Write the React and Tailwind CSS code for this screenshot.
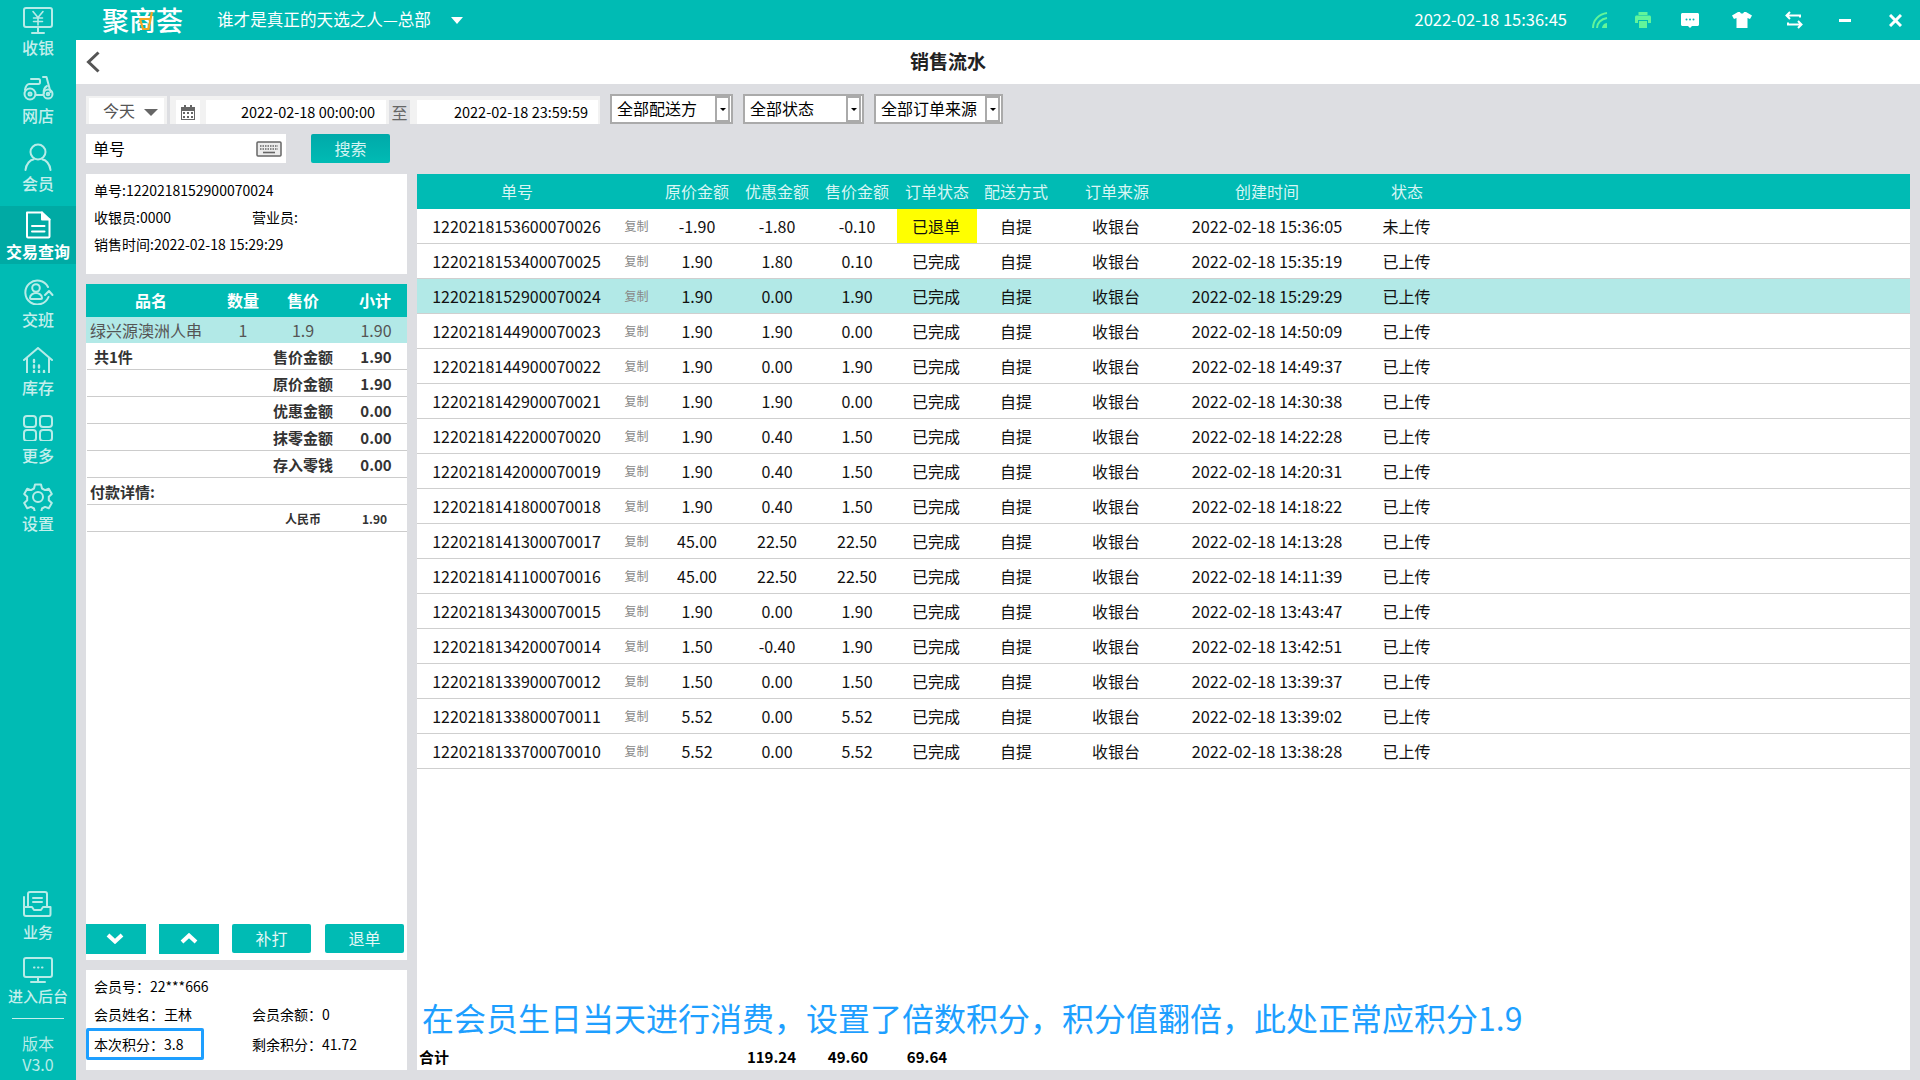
import React from "react";

const font = { fontFamily: '"Noto Sans CJK SC", "Noto Sans", sans-serif' };

const Svg = ({ children, w = 32, h = 28, vb, stroke = "#b7ece8", sw = 2 }) => (
  <svg
    width={w}
    height={h}
    viewBox={vb || `0 0 ${w} ${h}`}
    fill="none"
    stroke={stroke}
    strokeWidth={sw}
    strokeLinecap="round"
    strokeLinejoin="round"
  >
    {children}
  </svg>
);

const icons = {
  cash: (
    <Svg>
      <rect x="2" y="1" width="28" height="19" rx="2" />
      <path d="M11 4.500l5 6 5-6M16 10.500V18M11.500 11h9M11.500 14.500h9" strokeWidth="1.600" />
      <path d="M16 21v4M10 26h12" />
    </Svg>
  ),
  shop: (
    <Svg h={26}>
      <path d="M9 4h7.500c1 0 1.500.7 1.500 1.700v1.600c0 1-.6 1.700-1.600 1.700H7.500" />
      <path d="M21 2h3.500l4 15" />
      <circle cx="8" cy="19" r="5.500" />
      <circle cx="8" cy="19" r="1.500" />
      <circle cx="26" cy="19" r="4.500" />
      <circle cx="26" cy="19" r="1.300" />
      <path d="M13.500 20h7.500M3 15c.5-3 2-6 4.500-6M22 18c-1-3 1-6 3-7" />
    </Svg>
  ),
  member: (
    <Svg h={28}>
      <circle cx="16" cy="9" r="7.500" />
      <path d="M3.500 27c.5-6 5-10.500 8-10.500M28.500 27c-.5-6-5-10.500-8-10.500" />
    </Svg>
  ),
  order: (
    <Svg h={28} stroke="#ffffff">
      <path d="M5 1.500h15l7.500 7v17c0 .6-.4 1-1 1H6c-.6 0-1-.4-1-1z" />
      <path d="M20 1.500v7h7.500" fill="#ffffff" />
      <path d="M10 15h12.500M10 20.500h12.500" />
    </Svg>
  ),
  shift: (
    <Svg h={26}>
      <path d="M26 8A12 12 0 1 0 26.500 18" />
      <circle cx="14" cy="9" r="3.800" />
      <path d="M8 19c0-3 3-5 6-5s6 2 6 5c0 .6-.4 1-1 1H9c-.6 0-1-.4-1-1z" />
      <path d="M23 16l4-4 3.500 4" />
    </Svg>
  ),
  stock: (
    <Svg h={26}>
      <path d="M2 13L16 1l14 12" />
      <path d="M5 11v15M27 11v15" />
      <path d="M12 13v2M12 18.500v2M12 24v1.500M17 18.500v2M17 24v1.500M22 24v1.500" strokeWidth="2.400" />
    </Svg>
  ),
  more: (
    <Svg h={26}>
      <rect x="2" y="1" width="12" height="11" rx="3" />
      <rect x="18" y="1" width="12" height="11" rx="3" />
      <rect x="2" y="15" width="12" height="11" rx="3" />
      <rect x="18" y="15" width="12" height="11" rx="3" />
    </Svg>
  ),
  settings: (
    <Svg h={28}>
      <circle cx="16" cy="14" r="5" />
      <path d="M13 1.500h6l1 4 3 1.600 3.800-1.400 3 5.300-3 2.800v3.400l3 2.800-3 5.300-3.800-1.400-3 1.600-1 4h-6l-1-4-3-1.600-3.800 1.400-3-5.300 3-2.800v-3.400l-3-2.800 3-5.300 3.800 1.400 3-1.600z" />
    </Svg>
  ),
  business: (
    <Svg h={26}>
      <path d="M6 16V3c0-1 .8-2 2-2h15c1 0 2 1 2 2v13" />
      <path d="M2 6v17c0 1 .8 2 2 2h23c1 0 1.500-1 1.500-2v-7H21l-2 3h-7l-2-3H2" />
      <path d="M11 7h9M11 11h9" />
    </Svg>
  ),
  backend: (
    <Svg h={26}>
      <rect x="2" y="1" width="28" height="19" rx="2" />
      <path d="M12 10.500h.5M16 10.500h.5M20 10.500h.5" />
      <path d="M16 20v4M9 25h14" />
    </Svg>
  ),
};

const navTop = [
  { key: "cash", label: "收银" },
  { key: "shop", label: "网店" },
  { key: "member", label: "会员" },
  { key: "order", label: "交易查询", active: true },
  { key: "shift", label: "交班" },
  { key: "stock", label: "库存" },
  { key: "more", label: "更多" },
  { key: "settings", label: "设置" },
];

const orders = [
  ["1220218153600070026", "-1.90", "-1.80", "-0.10", "已退单", "15:36:05", "未上传"],
  ["1220218153400070025", "1.90", "1.80", "0.10", "已完成", "15:35:19", "已上传"],
  ["1220218152900070024", "1.90", "0.00", "1.90", "已完成", "15:29:29", "已上传"],
  ["1220218144900070023", "1.90", "1.90", "0.00", "已完成", "14:50:09", "已上传"],
  ["1220218144900070022", "1.90", "0.00", "1.90", "已完成", "14:49:37", "已上传"],
  ["1220218142900070021", "1.90", "1.90", "0.00", "已完成", "14:30:38", "已上传"],
  ["1220218142200070020", "1.90", "0.40", "1.50", "已完成", "14:22:28", "已上传"],
  ["1220218142000070019", "1.90", "0.40", "1.50", "已完成", "14:20:31", "已上传"],
  ["1220218141800070018", "1.90", "0.40", "1.50", "已完成", "14:18:22", "已上传"],
  ["1220218141300070017", "45.00", "22.50", "22.50", "已完成", "14:13:28", "已上传"],
  ["1220218141100070016", "45.00", "22.50", "22.50", "已完成", "14:11:39", "已上传"],
  ["1220218134300070015", "1.90", "0.00", "1.90", "已完成", "13:43:47", "已上传"],
  ["1220218134200070014", "1.50", "-0.40", "1.90", "已完成", "13:42:51", "已上传"],
  ["1220218133900070012", "1.50", "0.00", "1.50", "已完成", "13:39:37", "已上传"],
  ["1220218133800070011", "5.52", "0.00", "5.52", "已完成", "13:39:02", "已上传"],
  ["1220218133700070010", "5.52", "0.00", "5.52", "已完成", "13:38:28", "已上传"],
];

const summary = [
  ["共1件", "售价金额", "1.90"],
  ["", "原价金额", "1.90"],
  ["", "优惠金额", "0.00"],
  ["", "抹零金额", "0.00"],
  ["", "存入零钱", "0.00"],
];

const rowCols =
  "grid grid-cols-[200px_40px_80px_80px_80px_80px_80px_120px_180px_100px_1fr] items-center text-center";

const NavItem = ({ item }) => (
  <div
    className={`flex h-[58px] mb-[10px] flex-col items-center pt-[5px] ${item.active ? "bg-[#00aaa4]" : ""}`}
  >
    <div className="flex h-[28px] items-start justify-center">{icons[item.key]}</div>
    <div
      className={`mt-[3px] text-[16px] leading-[18px] ${item.active ? "font-bold text-white" : "font-medium text-[#c4efec]"}`}
    >
      {item.label}
    </div>
  </div>
);

const Sidebar = () => (
  <aside className="flex h-full w-[76px] shrink-0 flex-col bg-[#00bbb4] pt-[2px]">
    {navTop.map((item) => (
      <NavItem key={item.key} item={item} />
    ))}
    <div className="mt-auto flex flex-col items-center">
      <div className="flex h-[26px] items-start">{icons.business}</div>
      <div className="mt-[7px] text-[15px] font-medium leading-[16px] text-[#c4efec]">业务</div>
      <div className="mt-[17px] flex h-[26px] items-start">{icons.backend}</div>
      <div className="mt-[5px] text-[15px] font-medium leading-[16px] text-[#c4efec]">进入后台</div>
      <div className="mt-[14px] h-px w-[52px] bg-[#c4efec]" />
      <div className="mt-[15px] text-[16px] leading-[18px] text-[#b7ece8]">版本</div>
      <div className="mt-[3px] mb-[7px] text-[16px] leading-[18px] text-[#b7ece8]">V3.0</div>
    </div>
  </aside>
);

const TopBar = () => (
  <header className="flex h-[40px] items-center bg-[#00bbb4] pl-[26px] text-white">
    <div className="relative w-[81px] text-[27px] font-medium leading-[38px]">
      聚商荟
      <svg
        className="absolute left-[37px] top-[10px]"
        width="14"
        height="20"
        viewBox="0 0 14 20"
        fill="none"
        stroke="#f5a623"
        strokeWidth="2.200"
      >
        <path d="M13 1L9.500 18H4L1 8h10.500" />
      </svg>
    </div>
    <div className="ml-[34px] pb-[2px] text-[16.600px] leading-[38px]">谁才是真正的天选之人—总部</div>
    <div className="ml-[20px] h-0 w-0 border-x-[6px] border-t-[7px] border-x-transparent border-t-white" />
    <div className="ml-auto pb-[1px] text-[16.500px]">2022-02-18 15:36:45</div>
    <div className="ml-[12px] flex items-center">
      <div className="flex w-[42px] justify-center">
        <svg width="16" height="16" viewBox="0 0 16 16" fill="none" stroke="#62f59a" strokeWidth="2">
          <path d="M1 16C1 8 7 2 15 1M5 16c0-5 4-9 10-10" />
          <path d="M10 16c0-2 2-5 5-5v5z" fill="#62f59a" stroke="none" />
        </svg>
      </div>
      <div className="flex w-[44px] justify-center">
        <svg width="16" height="16" viewBox="0 0 16 16" fill="#62f59a">
          <path d="M3.500 0h9v3h-9zM1.500 3.500h13c.8 0 1.500.7 1.500 1.500v6h-3V8H3v3H0V5c0-.8.7-1.500 1.500-1.500zM4 9h8v7H4z" />
        </svg>
      </div>
      <div className="flex w-[50px] justify-center">
        <svg width="18" height="15" viewBox="0 0 18 15" fill="#ffffff">
          <path d="M1.500 0h15c.8 0 1.500.7 1.500 1.500v10c0 .8-.7 1.500-1.500 1.500H11l-2 2-2-2H1.500C.7 13 0 12.300 0 11.500v-10C0 .7.700 0 1.500 0z" />
          <circle cx="5.500" cy="6.500" r="1" fill="#00bbb4" />
          <circle cx="9" cy="6.500" r="1" fill="#00bbb4" />
          <circle cx="12.500" cy="6.500" r="1" fill="#00bbb4" />
        </svg>
      </div>
      <div className="flex w-[53px] justify-center">
        <svg width="20" height="16" viewBox="0 0 20 16" fill="#ffffff">
          <path d="M6 0h2c.5 1.200 1 1.500 2 1.500S11.500 1.200 12 0h2l6 3.500-2 3.500-2.500-1V16h-11V6L2 7 0 3.500z" />
        </svg>
      </div>
      <div className="flex w-[52px] justify-center">
        <svg width="18" height="18" viewBox="0 0 18 18" fill="none" stroke="#ffffff" strokeWidth="2">
          <path d="M5 1L1.500 4.500 5 8M2 4.500h13v2M13 10l3.500 3.500L13 17M16 13.500H3v-2" />
        </svg>
      </div>
      <div className="flex w-[50px] justify-center">
        <div className="h-[3px] w-[12px] bg-white" />
      </div>
      <div className="flex w-[50px] justify-center">
        <svg width="13" height="13" viewBox="0 0 13 13" stroke="#ffffff" strokeWidth="3">
          <path d="M1 1l11 11M12 1L1 12" />
        </svg>
      </div>
    </div>
  </header>
);

const Select = ({ label, width }) => (
  <div className={`flex h-[30px] items-center justify-between border-2 border-[#aaaaaa] bg-white pl-[5px] pr-[1px] ${width}`}>
    <span className="pb-[2px] text-[16px] leading-[22px] text-black">{label}</span>
    <span className="flex h-[26px] w-[15px] items-center justify-center border-2 border-[#aaaaaa]">
      <span className="h-0 w-0 border-x-[3px] border-t-[3px] border-x-transparent border-t-black" />
    </span>
  </div>
);

const FilterBar = () => (
  <div className="flex h-[40px] items-end">
    <div className="flex h-[28px] w-[81px] bg-[#f2f2f2] px-[3px] pt-[2px]">
      <div className="flex w-full items-center bg-white pl-[14px] text-[16px] text-[#555555]">
        <span className="pb-[2px]">今天</span>
        <span className="ml-[9px] mt-[3px] h-0 w-0 border-x-[7px] border-t-[7px] border-x-transparent border-t-[#666666]" />
      </div>
    </div>
    <div className="ml-[3px] flex h-[28px] w-[430px] bg-[#f2f2f2] pl-[6px] pt-[4px] text-[14.500px] text-black">
      <div className="flex w-[24px] items-center justify-center bg-white">
        <svg width="14" height="15" viewBox="0 0 14 15" fill="#666666">
          <path d="M0 2h3V0h2v2h4V0h2v2h3v13H0zM1 6v8h12V6z" />
          <path d="M2 7h2v2H2zM6 7h2v2H6zM10 7h2v2h-2zM2 11h2v2H2zM6 11h2v2H6zM10 11h2v2h-2z" />
        </svg>
      </div>
      <div className="ml-[6px] flex w-[180px] items-center justify-end bg-white pr-[11px]">2022-02-18 00:00:00</div>
      <div className="ml-[3px] flex w-[21px] items-center justify-center bg-[#dddee2] text-[16px] text-[#666666]">至</div>
      <div className="ml-[7px] flex w-[181px] items-center justify-end bg-white pr-[10px]">2022-02-18 23:59:59</div>
    </div>
    <div className="ml-[10px] flex gap-[10px]">
      <Select label="全部配送方" width="w-[123px]" />
      <Select label="全部状态" width="w-[121px]" />
      <Select label="全部订单来源" width="w-[129px]" />
    </div>
  </div>
);

const SearchBar = () => (
  <div className="mt-[10px] flex h-[29px]">
    <div className="flex w-[200px] items-center justify-between bg-white pl-[7px] pr-[4px] text-[16px] text-black">
      <span className="pb-[2px]">单号</span>
      <svg width="26" height="16" viewBox="0 0 26 16" fill="none" stroke="#666666">
        <rect x="1" y="1" width="24" height="14" rx="1" fill="#ececec" strokeWidth="1.500" />
        <path d="M4 5h18M4 8h18" strokeWidth="1.600" strokeDasharray="1.500 1" />
        <path d="M7 11.500h12" strokeWidth="1.600" />
      </svg>
    </div>
    <div className="ml-[25px] flex w-[79px] items-center justify-center rounded-[2px] bg-gradient-to-b from-[#00a9a9] to-[#00bbb4] pb-[2px] text-[16px] text-[#d5f5f3]">
      搜索
    </div>
  </div>
);

const LeftPanel = () => (
  <div className="flex w-[321px] shrink-0 flex-col">
    <div className="h-[100px] bg-white pl-[8px] pt-[3px] text-[14px] leading-[27px] text-black">
      <div>单号:1220218152900070024</div>
      <div className="flex">
        <span className="w-[158px]">收银员:0000</span>
        <span>营业员:</span>
      </div>
      <div>销售时间:2022-02-18 15:29:29</div>
    </div>

    <div className="mt-[10px] flex h-[676px] flex-col bg-white">
      <div className="grid h-[33px] grid-cols-[130px_54px_66px_1fr] items-center bg-[#00bbb4] pb-[2px] text-center text-[16px] font-bold text-white">
        <span>品名</span>
        <span>数量</span>
        <span>售价</span>
        <span className="pl-[7px]">小计</span>
      </div>
      <div className="grid h-[26px] grid-cols-[130px_54px_66px_1fr] items-center bg-[#b2e9e7] text-center text-[16px] text-[#555555]">
        <span className="whitespace-nowrap pl-[4px] text-left">绿兴源澳洲人串</span>
        <span>1</span>
        <span>1.9</span>
        <span className="pl-[9px]">1.90</span>
      </div>
      {summary.map((row) => (
        <div
          key={row[1]}
          className="ml-[1px] grid h-[27px] grid-cols-[186px_60px_1fr] items-center border-b border-[#cccccc] pt-[2px] text-[15px] font-bold text-[#333333]"
        >
          <span className="pl-[7px]">{row[0]}</span>
          <span className="whitespace-nowrap">{row[1]}</span>
          <span className="pl-[12px] text-center">{row[2]}</span>
        </div>
      ))}
      <div className="ml-[1px] flex h-[27px] items-center border-b border-[#cccccc] pl-[3px] pt-[2px] text-[15px] font-bold text-[#333333]">
        付款详情:
      </div>
      <div className="ml-[1px] grid h-[27px] grid-cols-[198px_36px_1fr] items-center border-b border-[#cccccc] pt-[2px] text-[12px] font-bold text-[#333333]">
        <span />
        <span className="whitespace-nowrap">人民币</span>
        <span className="pl-[21px] text-center">1.90</span>
      </div>

      <div className="mt-auto mb-[6px] flex items-start text-[16px] text-[#e2f7f5]">
        <button className="flex h-[30px] w-[60px] items-center justify-center bg-[#00bbb4]">
          <svg className="mb-[2px] mr-[2px]" width="18" height="11" viewBox="0 0 18 11" fill="none" stroke="#ffffff" strokeWidth="4">
            <path d="M2 2l7 6.500L16 2" />
          </svg>
        </button>
        <button className="ml-[13px] flex h-[30px] w-[60px] items-center justify-center bg-[#00bbb4]">
          <svg className="mb-[2px]" width="18" height="11" viewBox="0 0 18 11" fill="none" stroke="#ffffff" strokeWidth="4">
            <path d="M2 9l7-6.500L16 9" />
          </svg>
        </button>
        <button className="ml-[13px] h-[29px] w-[79px] rounded-[2px] bg-[#00bbb4] pb-[2px]">补打</button>
        <button className="ml-[14px] h-[29px] w-[79px] rounded-[2px] bg-[#00bbb4] pb-[2px]">退单</button>
      </div>
    </div>

    <div className="mt-[10px] h-[100px] bg-white pt-[2px] text-[14px] text-black">
      <div className="flex h-[28px] items-center pl-[8px]">会员号：22***666</div>
      <div className="grid h-[28px] grid-cols-[166px_1fr] items-center">
        <span className="pl-[8px]">会员姓名：王林</span>
        <span>会员余额：0</span>
      </div>
      <div className="grid h-[28px] grid-cols-[166px_1fr] items-center">
        <span className="flex h-[32px] w-[118px] items-center rounded-[2px] border-[3px] border-[#1e9fff] pl-[5px]">本次积分：3.8</span>
        <span>剩余积分：41.72</span>
      </div>
    </div>
  </div>
);

const OrderTable = () => (
  <div className="ml-[10px] mr-[10px] flex flex-1 flex-col bg-white">
    <div className={`${rowCols} h-[35px] bg-[#00bbb4] pb-[2px] text-[16px] text-[#d8f6f4]`}>
      <span>单号</span>
      <span />
      <span>原价金额</span>
      <span>优惠金额</span>
      <span>售价金额</span>
      <span>订单状态</span>
      <span className="pr-[2px]">配送方式</span>
      <span>订单来源</span>
      <span>创建时间</span>
      <span>状态</span>
    </div>
    {orders.map((row, index) => (
      <div
        key={row[0]}
        className={`${rowCols} h-[35px] border-b border-[#cfcfcf] text-[16px] text-[#111111] ${index === 2 ? "bg-[#b2e9e7]" : ""}`}
      >
        <span className="pr-[1px]">{row[0]}</span>
        <span className="pl-[1px] pr-[2px] text-[12px] text-[#888888]">复制</span>
        <span>{row[1]}</span>
        <span>{row[2]}</span>
        <span>{row[3]}</span>
        <span className={`flex h-full items-center justify-center pr-[2px] ${row[4] === "已退单" ? "bg-[#ffff00]" : ""}`}>{row[4]}</span>
        <span className="pr-[2px]">自提</span>
        <span className="pr-[2px]">收银台</span>
        <span className="text-[16.300px]">2022-02-18 {row[5]}</span>
        <span className="pr-[1px]">{row[6]}</span>
      </div>
    ))}
    <div className="mt-auto mb-[9px] h-[40px] whitespace-nowrap pl-[5px] text-[32px] leading-[40px] text-[#1e9fff]">
      在会员生日当天进行消费，设置了倍数积分，积分值翻倍，此处正常应积分1.9
    </div>
    <div className="grid h-[24px] grid-cols-[315px_77px_78px_80px] items-center pb-[2px] text-center text-[15px] font-bold text-black">
      <span className="pl-[2px] text-left">合计</span>
      <span className="pl-[2px]">119.24</span>
      <span>49.60</span>
      <span>69.64</span>
    </div>
  </div>
);

export default function App() {
  return (
    <div className="flex h-[1080px] w-[1920px] overflow-hidden bg-[#dddee2]" style={font}>
      <Sidebar />
      <div className="flex min-w-0 flex-1 flex-col">
        <TopBar />
        <div className="flex h-[44px] items-center bg-white">
          <svg className="ml-[10px]" width="14" height="22" viewBox="0 0 14 22" fill="none" stroke="#555555" strokeWidth="3">
            <path d="M12.500 1.500L2.500 11l10 9.500" />
          </svg>
          <div className="ml-[810px] pb-[2px] text-[19px] font-bold text-[#222222]">销售流水</div>
        </div>
        <div className="flex flex-1 flex-col pl-[10px]">
          <div>
            <FilterBar />
            <SearchBar />
          </div>
          <div className="mt-[11px] flex h-[896px]">
            <LeftPanel />
            <OrderTable />
          </div>
        </div>
      </div>
    </div>
  );
}
